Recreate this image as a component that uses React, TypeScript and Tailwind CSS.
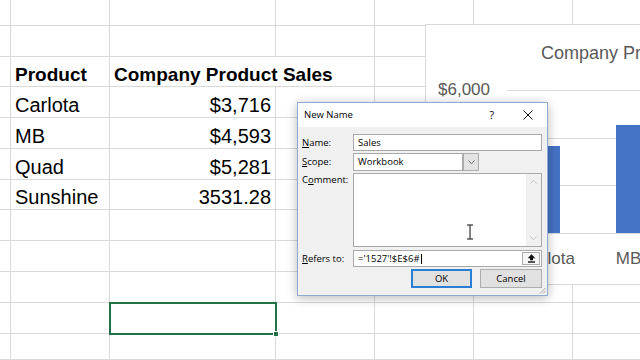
import React from "react";

const colClasses = [
  "w-[11px]",
  "w-[99px]",
  "w-[166px]",
  "w-[99px]",
  "w-[99px]",
  "w-[99px]",
  "w-[99px]",
];

const rowClasses = [
  "h-[26px]",
  "h-[31px]",
  "h-[30px]",
  "h-[31px]",
  "h-[31px]",
  "h-[31px]",
  "h-[30px]",
  "h-[31px]",
  "h-[31px]",
  "h-[31px]",
  "h-[31px]",
  "h-[26px]",
];

type RowData = { a: string; b: string; header?: boolean };

const data: Record<number, RowData> = {
  2: { a: "Product", b: "Company Product Sales", header: true },
  3: { a: "Carlota", b: "$3,716" },
  4: { a: "MB", b: "$4,593" },
  5: { a: "Quad", b: "$5,281" },
  6: { a: "Sunshine", b: "3531.28" },
};

function Sheet() {
  return (
    <div className="flex flex-col">
      {rowClasses.map((rc, ri) => {
        const d = data[ri];
        return (
          <div key={ri} className={`flex ${rc}`}>
            {colClasses.map((cc, ci) => {
              const noRight = d?.header && ci === 2;
              let content: React.ReactNode = null;
              let align = "justify-start";
              if (d && ci === 1) {
                content = d.a;
              } else if (d && ci === 2) {
                content = d.b;
                if (!d.header) align = "justify-end";
              }
              return (
                <div
                  key={ci}
                  className={`${cc} shrink-0 border-b border-[#d9d9d9] ${
                    noRight ? "" : "border-r"
                  } flex items-end ${align} px-[4px] pb-[2px] whitespace-nowrap leading-none ${
                    d?.header ? "font-bold text-[19px]" : "text-[20px]"
                  } text-black`}
                >
                  {content}
                </div>
              );
            })}
          </div>
        );
      })}
    </div>
  );
}

function Chart() {
  return (
    <div className="absolute left-[425px] top-[24px] w-[240px] h-[261px] bg-white border border-[#d9d9d9]">
      <svg className="absolute left-0 top-0" width="240" height="259">
        <line x1="81" y1="65.5" x2="240" y2="65.5" stroke="#d9d9d9" strokeWidth="1" />
        <line x1="81" y1="113.5" x2="240" y2="113.5" stroke="#d9d9d9" strokeWidth="1" />
        <line x1="81" y1="160.5" x2="240" y2="160.5" stroke="#d9d9d9" strokeWidth="1" />
        <rect x="109" y="121" width="25" height="87" fill="#4472c4" />
        <rect x="190" y="100" width="25" height="108" fill="#4472c4" />
        <line x1="81" y1="208.5" x2="240" y2="208.5" stroke="#d9d9d9" strokeWidth="1" />
      </svg>
      <div className="absolute left-[115px] top-[19px] text-[18px] leading-none text-[#595959] whitespace-nowrap">
        Company Product Sales
      </div>
      <div className="absolute left-[12px] top-[56px] text-[17px] leading-none text-[#595959] whitespace-nowrap">
        $6,000
      </div>
      <div className="absolute left-[81px] top-[225px] flex text-[17px] leading-none text-[#595959]">
        <div className="w-[81px] text-center whitespace-nowrap">Carlota</div>
        <div className="w-[81px] text-center whitespace-nowrap">MB</div>
      </div>
    </div>
  );
}

function Label({ children }: { children: React.ReactNode }) {
  return <div className="w-[51px] shrink-0 whitespace-nowrap">{children}</div>;
}

function Dialog() {
  return (
    <div
      className="absolute left-[297px] top-[102px] w-[251px] border border-[#8eaad2] bg-[#f0f0f0] shadow-[0_2px_10px_rgba(0,0,0,0.28)] text-[9.5px] leading-none text-black"
      style={{ fontFamily: '"Open Sans", "Noto Sans", sans-serif' }}
    >
      <div className="h-[24px] bg-white flex items-center pl-[6px]">
        <span className="text-[9.5px]">New Name</span>
        <span className="ml-auto text-[10.5px]">?</span>
        <svg className="ml-[29px] mr-[14px]" width="10" height="10" viewBox="0 0 10 10">
          <line x1="0.5" y1="0.5" x2="9.5" y2="9.5" stroke="#111" strokeWidth="1" />
          <line x1="9.5" y1="0.5" x2="0.5" y2="9.5" stroke="#111" strokeWidth="1" />
        </svg>
      </div>
      <div className="pl-[4px] pr-[5px] pt-[7px] pb-[7px] relative">
        <div className="flex items-center h-[17px]">
          <Label>
            <span className="underline underline-offset-1">N</span>ame:
          </Label>
          <div className="flex-1 h-full bg-white border border-[#a9a9a9] flex items-center pl-[4px]">
            Sales
          </div>
        </div>
        <div className="flex items-center h-[18px] mt-[2px]">
          <Label>
            <span className="underline underline-offset-1">S</span>cope:
          </Label>
          <div className="w-[126px] h-full flex">
            <div className="flex-1 h-full bg-white border border-[#a9a9a9] flex items-center pl-[4px]">
              Workbook
            </div>
            <div className="w-[16px] h-full bg-[#e3e3e3] border border-[#adadad] flex items-center justify-center">
              <svg width="7" height="5" viewBox="0 0 7 5">
                <polyline points="0.5,0.5 3.5,3.8 6.5,0.5" fill="none" stroke="#6b6b6b" strokeWidth="1" />
              </svg>
            </div>
          </div>
        </div>
        <div className="flex items-start h-[74px] mt-[2px]">
          <Label>
            <div className="pt-[2px]">
              C<span className="underline underline-offset-1">o</span>mment:
            </div>
          </Label>
          <div className="flex-1 h-full bg-white border border-[#a9a9a9] flex justify-end">
            <div className="w-[15px] h-full bg-[#f0f0f0] flex flex-col items-center justify-between py-[5px]">
              <svg width="7" height="5" viewBox="0 0 7 5">
                <polyline points="0.5,4.5 3.5,1.2 6.5,4.5" fill="none" stroke="#c4c4c4" strokeWidth="1" />
              </svg>
              <svg width="7" height="5" viewBox="0 0 7 5">
                <polyline points="0.5,0.5 3.5,3.8 6.5,0.5" fill="none" stroke="#c4c4c4" strokeWidth="1" />
              </svg>
            </div>
          </div>
        </div>
        <div className="flex items-center h-[17px] mt-[3px]">
          <Label>
            <span className="underline underline-offset-1">R</span>efers to:
          </Label>
          <div className="flex-1 h-full bg-white border border-[#a9a9a9] flex items-center pl-[4px]">
            <span>='1527'!$E$6#</span>
            <span className="w-[1px] h-[10px] bg-black ml-[1px]" />
            <div className="ml-auto mr-[1px] w-[18px] h-[13px] bg-[#f7f7f7] border border-[#adadad] flex items-center justify-center">
              <svg width="9" height="9" viewBox="0 0 9 9">
                <polygon points="4.5,0.3 8.3,4.2 6,4.2 6,6.3 3,6.3 3,4.2 0.7,4.2" fill="#111" />
                <rect x="1" y="7.3" width="7" height="1.4" fill="#111" />
              </svg>
            </div>
          </div>
        </div>
        <div className="flex justify-end gap-[8px] h-[19px] mt-[2px]">
          <div className="w-[61px] h-full bg-[#e1e1e1] border-2 border-[#2a7fd4] flex items-center justify-center">
            OK
          </div>
          <div className="w-[62px] h-full bg-[#e1e1e1] border border-[#adadad] flex items-center justify-center">
            Cancel
          </div>
        </div>
        <svg className="absolute right-[1px] bottom-[1px]" width="8" height="8" viewBox="0 0 8 8">
          <line x1="7.5" y1="2" x2="2" y2="7.5" stroke="#a8a8a8" strokeWidth="1" />
          <line x1="7.5" y1="5" x2="5" y2="7.5" stroke="#a8a8a8" strokeWidth="1" />
        </svg>
      </div>
    </div>
  );
}

export default function App() {
  return (
    <div
      className="relative w-[640px] h-[360px] overflow-hidden bg-white"
      style={{ fontFamily: '"Liberation Sans", Arial, sans-serif' }}
    >
      <Sheet />
      {/* selected cell */}
      <div className="absolute left-[109px] top-[302px] w-[168px] h-[33px] border-2 border-[#217346]" />
      <div className="absolute left-[273px] top-[331px] w-[6px] h-[6px] bg-[#217346] border border-white" />
      <Chart />
      <Dialog />
      {/* I-beam cursor */}
      <svg className="absolute left-[465px] top-[224px]" width="10" height="16" viewBox="0 0 10 16">
        <line x1="2" y1="1" x2="8" y2="1" stroke="#333" strokeWidth="1.2" />
        <line x1="5" y1="1" x2="5" y2="15" stroke="#333" strokeWidth="1.2" />
        <line x1="2" y1="15" x2="8" y2="15" stroke="#333" strokeWidth="1.2" />
      </svg>
    </div>
  );
}
